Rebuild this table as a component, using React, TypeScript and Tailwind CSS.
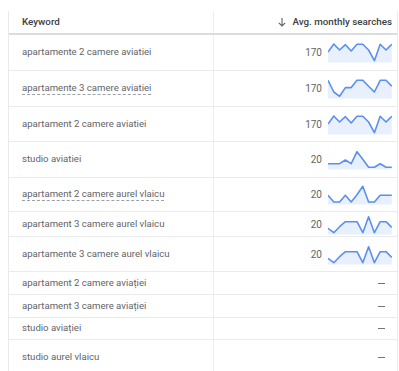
const rows: { keyword: string; dashed?: boolean; volume?: string; trend?: number[]; h: string }[] = [
  { keyword: 'apartamente 2 camere aviatiei', volume: '170', h: 'h-[36px]', trend: [10, 2, 8, 2.7, 9, 2.3, 2.3, 8, 18.7, 2.3, 8, 2.3] },
  { keyword: 'apartamente 3 camere aviatiei', dashed: true, volume: '170', h: 'h-[36px]', trend: [2.3, 14, 18.3, 9.6, 9.6, 2.3, 2.3, 8.3, 14, 2.3, 2.3, 8.3] },
  { keyword: 'apartament 2 camere aviatiei', volume: '170', h: 'h-[35px]', trend: [10, 2, 8, 2.7, 9, 2.3, 2.3, 8, 18.7, 2.3, 8, 2.3] },
  { keyword: 'studio aviatiei', volume: '20', h: 'h-[36px]', trend: [14.7, 14.7, 14.7, 11, 14.7, 2.7, 10.3, 18.3, 18.3, 14.7, 18.3, 18.3] },
  { keyword: 'apartament 2 camere aurel vlaicu', dashed: true, volume: '20', h: 'h-[34px]', trend: [11.3, 18, 18, 11.3, 18, 10.7, 2.3, 18, 18, 11.3, 11.3, 11.3] },
  { keyword: 'apartament 3 camere aurel vlaicu', volume: '20', h: 'h-[25px]', trend: [14.3, 18.7, 12.7, 7.7, 7.7, 7.7, 18.7, 2.7, 18.7, 7.7, 7.7, 13.3] },
  { keyword: 'apartamente 3 camere aurel vlaicu', volume: '20', h: 'h-[35px]', trend: [14.3, 18.7, 12.7, 7.7, 7.7, 7.7, 18.7, 2.7, 18.7, 7.7, 7.7, 13.3] },
  { keyword: 'apartament 2 camere aviației', h: 'h-[23px]' },
  { keyword: 'apartament 3 camere aviației', h: 'h-[23px]' },
  { keyword: 'studio aviației', h: 'h-[22px]' },
  { keyword: 'studio aurel vlaicu', h: 'h-[36px]' },
]

function Sparkline({ data }: { data: number[] }) {
  const pts = data.map((y, i) => `${(i * 5.8).toFixed(1)},${y}`).join(' ')
  const area = `0,20.5 ${pts} ${((data.length - 1) * 5.8).toFixed(1)},20.5`
  return (
    <svg width="64" height="21" viewBox="0 0 64 21" className="shrink-0">
      <polygon points={area} fill="#e8f0fe" />
      <polyline points={pts} fill="none" stroke="#5b8ff0" strokeWidth="1.6" strokeLinejoin="round" />
    </svg>
  )
}

export default function App() {
  return (
    <div className="min-h-[371px] bg-white pt-[11px] font-['Roboto',sans-serif]">
      <div className="ml-[8px] w-[390px] border-l border-r border-[#e8eaed]">
        {/* header */}
        <div className="flex h-[24px] border-b-2 border-[#dadce0] text-[9.8px] font-medium text-[#3c4043]">
          <div className="flex w-[205px] items-center border-r border-[#eceef0] pl-[13px]">Keyword</div>
          <div className="flex flex-1 items-center justify-end gap-[5px] pr-[5px]">
            <svg width="10" height="10" viewBox="0 0 10 10" fill="none" stroke="#5f6368" strokeWidth="1.1">
              <path d="M5 1v8M1.8 5.8 5 9l3.2-3.2" />
            </svg>
            <span>Avg. monthly searches</span>
          </div>
        </div>

        {rows.map((r) => (
          <div key={r.keyword} className={`flex ${r.h} border-b border-[#e8eaed] text-[9.6px] text-[#5f6368]`}>
            <div className="flex w-[205px] items-center border-r border-[#eceef0] pl-[13px]">
              <span className={r.dashed ? 'underline decoration-dashed decoration-[#9aa0a6] underline-offset-[3px]' : ''}>
                {r.keyword}
              </span>
            </div>
            {r.trend ? (
              <div className="flex flex-1 items-center justify-end gap-[6px] pr-[5px] text-[10px]">
                <span>{r.volume}</span>
                <Sparkline data={r.trend} />
              </div>
            ) : (
              <div className="flex flex-1 items-center justify-end pr-[12px]">
                <span className="block h-px w-[7px] bg-[#70757a]" />
              </div>
            )}
          </div>
        ))}
      </div>
    </div>
  )
}
